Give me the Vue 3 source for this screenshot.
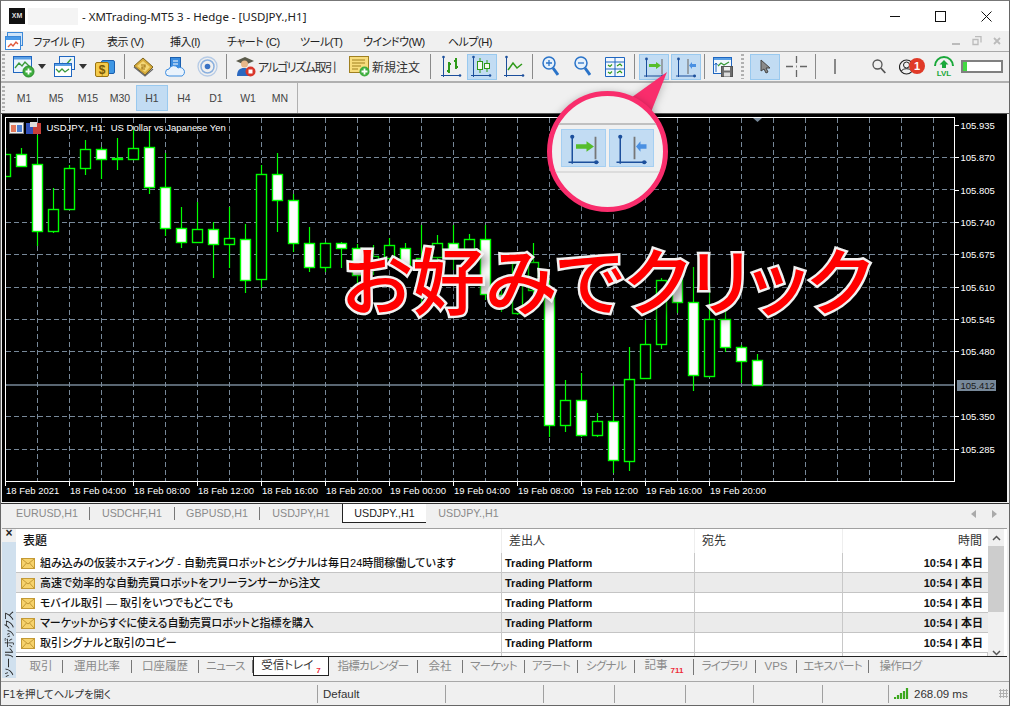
<script setup>
const priceLabels = [
  [125, '105.935'], [157.5, '105.870'], [190, '105.805'], [222, '105.740'], [254, '105.675'],
  [287, '105.610'], [319, '105.545'], [351, '105.480'], [416, '105.350'], [449, '105.285'],
]
const gridY = [157.5, 189.5, 222.5, 254.5, 287.5, 319.5, 351.5, 416.5, 449.5]
const gridX = Array.from({ length: 29 }, (_, i) => 37.5 + i * 32)

const timeLabels = [
  '18 Feb 2021', '18 Feb 04:00', '18 Feb 08:00', '18 Feb 12:00', '18 Feb 16:00',
  '18 Feb 20:00', '19 Feb 00:00', '19 Feb 04:00', '19 Feb 08:00', '19 Feb 12:00',
  '19 Feb 16:00', '19 Feb 20:00',
]

// x, wick top, wick bottom, body top, body bottom, white body?
const candles = [
  [5, 148, 180, 154, 176, 0], [21, 148, 167, 154, 166, 1], [37, 135, 246, 164, 231, 1],
  [53, 188, 233, 209, 231, 0], [69, 165, 209, 168, 209, 0], [85, 140, 175, 149, 168, 0],
  [101, 147, 179, 149, 159, 1], [117, 138, 170, 158, 159, 1], [133, 130, 160, 148, 159, 0],
  [149, 130, 194, 147, 187, 1], [165, 153, 236, 187, 228, 1], [181, 207, 248, 228, 242, 1],
  [197, 202, 242, 229, 242, 0], [213, 222, 278, 229, 244, 1], [229, 207, 268, 238, 244, 0],
  [245, 224, 293, 239, 280, 1], [261, 165, 288, 174, 279, 0], [277, 153, 232, 174, 200, 1],
  [293, 194, 252, 200, 243, 1], [309, 227, 272, 243, 267, 1], [325, 242, 272, 243, 267, 0],
  [341, 242, 268, 243, 248, 1], [357, 244, 286, 248, 275, 1], [373, 245, 275, 256, 268, 0],
  [389, 238, 265, 245, 258, 0], [405, 243, 268, 248, 265, 1], [421, 225, 315, 258, 266, 0],
  [437, 235, 270, 243, 257, 0], [453, 225, 270, 243, 257, 1], [469, 234, 268, 239, 257, 0],
  [485, 225, 300, 239, 294, 1], [501, 290, 312, 294, 300, 1], [517, 263, 315, 263, 313, 0],
  [533, 243, 303, 262, 290, 0], [549, 280, 437, 290, 425, 1], [565, 380, 432, 400, 425, 0],
  [581, 373, 437, 400, 435, 1], [597, 413, 437, 421, 435, 0], [613, 386, 473, 421, 460, 1],
  [629, 347, 471, 379, 461, 0], [645, 320, 378, 344, 378, 0], [661, 278, 349, 280, 344, 0],
  [677, 262, 313, 279, 302, 1], [693, 267, 391, 302, 375, 1], [709, 284, 377, 319, 376, 0],
  [725, 310, 352, 319, 347, 1], [741, 345, 383, 347, 361, 1], [757, 354, 385, 360, 385, 1],
].map(([x, wickTop, wickBottom, top, bottom, white]) => ({ x, wickTop, wickBottom, top, bottom, white }))

const menus = ['ファイル (F)', '表示 (V)', '挿入(I)', 'チャート (C)', 'ツール(T)', 'ウインドウ(W)', 'ヘルプ(H)']
const periods = ['M1', 'M5', 'M15', 'M30', 'H1', 'H4', 'D1', 'W1', 'MN']
const chartTabs = ['EURUSD,H1', 'USDCHF,H1', 'GBPUSD,H1', 'USDJPY,H1', 'USDJPY.,H1', 'USDJPY.,H1']

const mails = [
  '組み込みの仮装ホスティング - 自動売買ロボットとシグナルは毎日24時間稼働しています',
  '高速で効率的な自動売買ロボットをフリーランサーから注文',
  'モバイル取引 — 取引をいつでもどこでも',
  'マーケットからすぐに使える自動売買ロボットと指標を購入',
  '取引シグナルと取引のコピー',
]

const toolTabs = [
  { name: '取引' }, { name: '運用比率' }, { name: '口座履歴' }, { name: 'ニュース', kana: true },
  { name: '受信トレイ', count: '7', active: true }, { name: '指標カレンダー', kana: true }, { name: '会社' },
  { name: 'マーケット', kana: true }, { name: 'アラート', kana: true }, { name: 'シグナル', kana: true },
  { name: '記事', count: '711' }, { name: 'ライブラリ', kana: true }, { name: 'VPS' },
  { name: 'エキスパート', kana: true }, { name: '操作ログ', kana: true },
]
</script>

<template>
  <div class="window">
    <svg class="symbols" width="0" height="0">
      <symbol id="shift-on" viewBox="0 0 30 25">
        <path d="M7.500 5v18M5 22h20" stroke="#1c4f9c" fill="none" />
        <circle cx="7.500" cy="5" r="1.400" fill="#1c4f9c" />
        <circle cx="23.500" cy="22" r="1.400" fill="#1c4f9c" />
        <path d="M23 5v15" stroke="#777" stroke-width="1.200" />
        <path d="M10 10h7V8l5 3.500-5 3.500V13h-7z" fill="#56bd2c" />
      </symbol>
      <symbol id="shift-off" viewBox="0 0 30 25">
        <path d="M7.500 5v18M5 22h20" stroke="#1c4f9c" fill="none" />
        <circle cx="7.500" cy="5" r="1.400" fill="#1c4f9c" />
        <circle cx="23.500" cy="22" r="1.400" fill="#1c4f9c" />
        <path d="M17 5v15" stroke="#777" stroke-width="1.200" />
        <path d="M25 10h-4V8l-3 3.500 3 3.500v-2h4z" fill="#4a90e2" />
      </symbol>
    </svg>

    <header class="titlebar">
      <div class="logo">XM</div>
      <div class="blurred"></div>
      <div class="title">- XMTrading-MT5 3 - Hedge - [USDJPY.,H1]</div>
      <div class="win-buttons">
        <svg width="10" height="10"><path d="M0 5.500h10" stroke="#111" /></svg>
        <svg width="11" height="11"><rect x=".5" y=".5" width="10" height="10" fill="none" stroke="#111" /></svg>
        <svg width="11" height="11"><path d="M.5.500l10 10M10.500.500l-10 10" stroke="#111" /></svg>
      </div>
    </header>

    <nav class="menubar">
      <svg class="menu-icon" width="18" height="18" viewBox="0 0 18 18">
        <rect x="2.500" y=".5" width="15" height="13" fill="#cfe4f8" stroke="#3b88d8" />
        <rect x=".5" y="4.500" width="15" height="13" fill="#fff" stroke="#3b88d8" />
        <rect x="1" y="5" width="14" height="3" fill="#4a9ae8" />
        <path d="M3 15l3-3 2 2 3-4 2 2" fill="none" stroke="#e2593a" stroke-width="1.300" />
      </svg>
      <div class="menu-items">
        <span v-for="menu in menus" :key="menu">{{ menu }}</span>
      </div>
      <div class="mdi-buttons">
        <svg width="9" height="9"><path d="M0 7h8" stroke="#bbb" stroke-width="2" /></svg>
        <svg width="10" height="10"><path d="M3 .5h6v6M1 3.500h5v5H1z" fill="none" stroke="#bbb" stroke-width="1.300" /></svg>
        <svg width="9" height="9"><path d="M1 1l6 6M7 1L1 7" stroke="#bbb" stroke-width="1.800" /></svg>
      </div>
    </nav>

    <div class="toolbar">
      <i class="grip"></i>
      <svg width="22" height="22" viewBox="0 0 22 22">
        <rect x=".5" y=".5" width="18" height="16" fill="#eaf3fc" stroke="#1f66c0" />
        <rect x="1" y="1" width="17" height="2.500" fill="#5aa0e6" />
        <path d="M2 12l4-5 3 3 3-4 5 5" fill="none" stroke="#3a9a3a" stroke-width="1.300" />
        <circle cx="15.500" cy="15.500" r="5.500" fill="#3fae3f" stroke="#2a8a2a" />
        <path d="M15.500 12.500v6M12.500 15.500h6" stroke="#fff" stroke-width="1.800" />
      </svg>
      <svg width="8" height="5"><path d="M0 0h8L4 5z" fill="#333" /></svg>
      <svg width="22" height="22" viewBox="0 0 22 22">
        <rect x="5.500" y=".5" width="15" height="13" fill="#eaf3fc" stroke="#1f66c0" />
        <path d="M8 7l3 3 6-7" fill="none" stroke="#3a9a3a" stroke-width="1.300" />
        <rect x=".5" y="7.500" width="17" height="13" fill="#fff" stroke="#1f66c0" />
        <rect x="1" y="8" width="16" height="2" fill="#5aa0e6" />
        <path d="M2 13l3 3 3-3 3 3 4-3" fill="none" stroke="#3a9a3a" stroke-width="1.300" />
      </svg>
      <svg width="8" height="5"><path d="M0 0h8L4 5z" fill="#333" /></svg>
      <svg width="20" height="20" viewBox="0 0 20 20">
        <rect x="6.500" y="3.500" width="13" height="13" rx="1.500" fill="#3f97e4" stroke="#1b5fae" />
        <rect x=".5" y="5.500" width="13" height="14" rx="1.500" fill="#f5cb4c" stroke="#9a7412" />
        <text x="7" y="17" class="dollar">$</text>
      </svg>
      <i class="sep"></i>
      <svg width="21" height="20" viewBox="0 0 21 20">
        <path d="M1 9l9-8 10 9-8 8z" fill="#d8ac3c" stroke="#7d6520" />
        <path d="M4 9l6-5 7 6-5 5z" fill="#f3d777" />
        <path d="M8 8h4v2H9v2h3" fill="none" stroke="#a5781a" stroke-width="1.200" />
        <path d="M1 10l11 9 8-7" fill="none" stroke="#666" stroke-width="1.200" />
      </svg>
      <svg width="21" height="20" viewBox="0 0 21 20">
        <rect x="5.500" y=".5" width="10" height="13" fill="#3c8de0" stroke="#1b5fae" />
        <path d="M8 4h5M8 7h5" stroke="#fff" />
        <path d="M4 19a3.500 3.500 0 0 1 0-7 5 5 0 0 1 9-1 4 4 0 0 1 4 8z" fill="#eaf3fc" stroke="#3c8de0" />
      </svg>
      <svg width="21" height="21" viewBox="0 0 21 21" fill="none">
        <circle cx="10.500" cy="10.500" r="9.500" stroke="#b6cbe6" stroke-width="1.300" />
        <circle cx="10.500" cy="10.500" r="6.500" stroke="#8bb0de" stroke-width="1.500" />
        <circle cx="10.500" cy="10.500" r="2.800" fill="#3b73c4" />
      </svg>
      <i class="sep"></i>
      <div class="labeled">
        <svg width="21" height="21" viewBox="0 0 21 21">
          <path d="M1 5l9-4 9 4-9 4z" fill="#5a5a4a" />
          <circle cx="9.500" cy="8" r="3.500" fill="#e8b88a" />
          <path d="M2 20c0-6 3-8 7-8s7 2 7 8z" fill="#2a68c0" />
          <circle cx="15.500" cy="15.500" r="5" fill="#d9362a" />
          <rect x="13.500" y="13.500" width="4" height="4" fill="#fff" />
        </svg>
        <span class="algo">アルゴリズム取引</span>
      </div>
      <div class="labeled">
        <svg width="21" height="21" viewBox="0 0 21 21">
          <rect x=".5" y=".5" width="19" height="16" fill="#f8dd7d" stroke="#a08020" />
          <path d="M3 4h13M3 7h13M3 10h9M3 13h6" stroke="#a08020" />
          <circle cx="15.500" cy="15.500" r="5" fill="#3fae3f" />
          <path d="M15.500 12.500v6M12.500 15.500h6" stroke="#fff" stroke-width="1.800" />
        </svg>
        <span>新規注文</span>
      </div>
      <i class="sep"></i>
      <svg width="22" height="23" viewBox="0 0 22 23">
        <path d="M3.500 2v20M1 20.500h20" stroke="#1c4f9c" fill="none" />
        <circle cx="3.500" cy="2" r="1.300" fill="#1c4f9c" />
        <circle cx="20" cy="20.500" r="1.300" fill="#1c4f9c" />
        <path d="M9 7v11M7 16h2M9 9h2M16 3v11M14 6h2M16 12h2" stroke="#2f9a1a" stroke-width="2" fill="none" />
      </svg>
      <div class="on">
        <svg width="22" height="23" viewBox="0 0 22 23">
          <path d="M2.500 2v20M0 20.500h20" stroke="#1c4f9c" fill="none" />
          <circle cx="2.500" cy="2" r="1.300" fill="#1c4f9c" />
          <circle cx="19" cy="20.500" r="1.300" fill="#1c4f9c" />
          <path d="M9 3v15M16 5v12" stroke="#2f9a1a" />
          <rect x="6.500" y="6.500" width="5" height="8" fill="#f4f9ef" stroke="#2f9a1a" />
          <rect x="13.500" y="8.500" width="5" height="5" fill="#f4f9ef" stroke="#2f9a1a" />
        </svg>
      </div>
      <svg width="22" height="23" viewBox="0 0 22 23">
        <path d="M3.500 2v20M1 20.500h20" stroke="#1c4f9c" fill="none" />
        <circle cx="3.500" cy="2" r="1.300" fill="#1c4f9c" />
        <circle cx="20" cy="20.500" r="1.300" fill="#1c4f9c" />
        <path d="M5 15l5-7 4 5 5-4" stroke="#2f9a1a" stroke-width="1.500" fill="none" />
      </svg>
      <i class="sep"></i>
      <svg width="17" height="21" viewBox="0 0 17 21" fill="none">
        <circle cx="7" cy="7" r="6" fill="#e6f1fb" stroke="#2a73c8" stroke-width="1.500" />
        <path d="M4 7h6M7 4v6" stroke="#2a73c8" stroke-width="1.300" />
        <path d="M11 12l5 7" stroke="#2a73c8" stroke-width="3" />
      </svg>
      <svg width="17" height="21" viewBox="0 0 17 21" fill="none">
        <circle cx="7" cy="7" r="6" fill="#e6f1fb" stroke="#2a73c8" stroke-width="1.500" />
        <path d="M4 7h6" stroke="#2a73c8" stroke-width="1.300" />
        <path d="M11 12l5 7" stroke="#2a73c8" stroke-width="3" />
      </svg>
      <svg width="20" height="20" viewBox="0 0 20 20">
        <path d="M.5.500h19v19H.5zM.5 5h19M.5 12h19M10 .5v19" fill="#f3f8fd" stroke="#1f66c0" />
        <path d="M3 8l2 1.500 2-2M12 9l3-2 2 2M3 15l2 1.500 2-2M12 16l3-2 2 2" fill="none" stroke="#2f9a1a" stroke-width="1.200" />
      </svg>
      <i class="sep"></i>
      <div class="on"><svg width="30" height="25"><use href="#shift-on" /></svg></div>
      <div class="on"><svg width="30" height="25"><use href="#shift-off" /></svg></div>
      <i class="sep"></i>
      <svg width="20" height="20" viewBox="0 0 20 20">
        <rect x=".5" y=".5" width="18" height="16" fill="#f3f8fd" stroke="#1f66c0" />
        <rect x="1" y="1" width="17" height="2" fill="#5aa0e6" />
        <path d="M3 6v9M1.500 8L3 6l1.500 2" fill="none" stroke="#1f66c0" />
        <path d="M5 9l3-3 3 2 5-3" fill="none" stroke="#3a9a3a" stroke-width="1.300" />
        <rect x="8.500" y="9.500" width="11" height="10" fill="#6e6e6e" stroke="#555" />
        <rect x="11" y="10" width="6" height="3.500" fill="#eee" />
        <rect x="11" y="15.500" width="6" height="4" fill="#ddd" />
      </svg>
      <i class="grip"></i>
      <div class="on">
        <svg width="11" height="15" viewBox="0 0 11 15">
          <path d="M1 1v11l3-2 2 4 2-1-2-4h4z" fill="#8a8a8a" stroke="#444" />
        </svg>
      </div>
      <svg width="21" height="21" viewBox="0 0 21 21">
        <path d="M10.500 0v7M10.500 14v7M0 10.500h7M14 10.500h7" stroke="#666" stroke-width="1.300" />
        <path d="M10.500 9.500v2" stroke="#888" />
      </svg>
      <i class="sep"></i>
      <svg width="2" height="15"><path d="M1 0v15" stroke="#666" stroke-width="1.500" /></svg>
      <svg width="14" height="15" viewBox="0 0 14 15" fill="none">
        <circle cx="5.500" cy="5.500" r="4.500" stroke="#555" stroke-width="1.300" />
        <path d="M8.800 9l4.500 5" stroke="#555" stroke-width="1.800" />
      </svg>
      <svg class="account" width="26" height="17" viewBox="0 0 26 17" fill="none">
        <circle cx="7.500" cy="9" r="7" stroke="#222" stroke-width="1.200" />
        <circle cx="7.500" cy="7" r="3" stroke="#222" />
        <path d="M2.500 13c1-3 9-3 10 0" stroke="#222" />
        <circle cx="18" cy="8" r="8" fill="#e03a28" />
        <text x="18" y="12" class="badge">1</text>
      </svg>
      <svg width="20" height="21" viewBox="0 0 20 21" fill="none">
        <path d="M1 10a8.500 8.500 0 0 1 18 0" stroke="#19a83a" stroke-width="2" />
        <path d="M10 4l4.500 4.500H12V12H8V8.500H5.500z" fill="#19a83a" />
        <text x="10" y="20" class="lvl">LVL</text>
      </svg>
      <div class="progress"><i></i></div>
    </div>

    <div class="periods">
      <i class="grip"></i>
      <div class="period-list">
        <span v-for="period in periods" :key="period" :class="{ current: period === 'H1' }">{{ period }}</span>
      </div>
    </div>

    <main class="chart">
      <svg width="1005" height="388" viewBox="0 114 1005 388" class="plot">
        <clipPath id="plot-area"><rect x="6" y="118" width="948" height="363" /></clipPath>
        <g class="grid">
          <line v-for="y in gridY" :key="y" x1="6" :y1="y" x2="954" :y2="y" />
          <line v-for="x in gridX" :key="x" :x1="x" y1="118" :x2="x" y2="481" />
        </g>
        <line x1="6" y1="385" x2="955" y2="385" stroke="#778899" stroke-width="1.500" />
        <g clip-path="url(#plot-area)">
          <g v-for="c in candles" :key="c.x">
            <line class="wick" :x1="c.x + 0.5" :y1="c.wickTop" :x2="c.x + 0.5" :y2="c.wickBottom" />
            <rect class="body" :x="c.x - 4.5" :y="c.top + 0.5" width="10" :height="c.bottom - c.top"
                  :fill="c.white ? '#fff' : '#000'" />
          </g>
        </g>
        <rect x="5.500" y="117.500" width="949" height="364" fill="none" stroke="#fff" />
        <path d="M753 118h9l-4.500 4z" fill="#778899" />
        <g stroke="#fff">
          <line v-for="[y] in priceLabels" :key="y" x1="955" :y1="Math.floor(y) + 0.5" x2="959" :y2="Math.floor(y) + 0.5" />
          <line v-for="(label, i) in timeLabels" :key="i" :x1="5.500 + i * 64" y1="482" :x2="5.500 + i * 64" y2="486" />
        </g>
        <g class="axis-text">
          <text v-for="[y, label] in priceLabels" :key="label" x="960.500" :y="y + 3.500">{{ label }}</text>
          <text v-for="(label, i) in timeLabels" :key="label" :x="6 + i * 64" y="494">{{ label }}</text>
        </g>
        <rect x="957" y="380" width="39" height="11" fill="#778899" />
        <text x="960.500" y="389" class="axis-text last">105.412</text>

        <g>
          <rect x="9.500" y="122.500" width="14" height="11" fill="#f0f0f0" stroke="#888" />
          <path d="M11 125h5v7h-5z" fill="#e2775a" />
          <path d="M17 125h5v7h-5z" fill="#4d7fd0" />
          <rect x="26" y="123" width="7" height="11" fill="#2f4fb8" />
          <rect x="33" y="123" width="8" height="11" fill="#c8403a" />
          <rect x="30" y="122" width="7" height="5" fill="#ddd" />
        </g>
        <text x="46.500" y="131" class="chart-title">USDJPY., H1:&#160; US Dollar vs Japanese Yen</text>
      </svg>
      <div class="banner">お好みでクリック</div>
    </main>

    <div class="chart-tabs">
      <span v-for="(tab, i) in chartTabs" :key="i" :class="{ active: i === 4 }">{{ tab }}</span>
      <div class="tab-arrows">
        <svg width="5" height="8"><path d="M5 0v8L0 4z" fill="#aaa" /></svg>
        <svg width="5" height="8"><path d="M0 0v8l5-4z" fill="#aaa" /></svg>
      </div>
    </div>

    <section class="toolbox">
      <aside class="strip">
        <div class="close">×</div>
        <div class="strip-label"><span>ツールボックス</span></div>
      </aside>
      <div class="box-main">
        <div class="box-body">
          <div class="mail-table">
            <div class="mail-row head">
              <div class="subject">表題</div>
              <div>差出人</div>
              <div>宛先</div>
              <div class="when">時間</div>
            </div>
            <div v-for="(mail, i) in mails" :key="mail" class="mail-row" :class="{ alt: i % 2 === 1 }">
              <div class="subject">
                <svg width="14" height="11" viewBox="0 0 14 11">
                  <rect x=".5" y=".5" width="13" height="10" fill="#f6d26c" stroke="#c49a35" />
                  <path d="M1 1l6 5 6-5M1 10l4.500-5M13 10L8.500 5" fill="none" stroke="#c49a35" />
                </svg>
                <span>{{ mail }}</span>
              </div>
              <div class="sender">Trading Platform</div>
              <div></div>
              <div class="when stamp">10:54 | 本日</div>
            </div>
            <div class="mail-row stub"><div></div><div></div><div></div><div></div></div>
          </div>
          <div class="scrollbar">
            <svg width="9" height="6"><path d="M1 5l3.500-3.500L8 5" fill="none" stroke="#555" stroke-width="1.500" /></svg>
            <div class="track"><div class="thumb"></div></div>
            <svg width="9" height="6"><path d="M1 1l3.500 3.500L8 1" fill="none" stroke="#555" stroke-width="1.500" /></svg>
          </div>
        </div>
        <div class="tool-tabs">
          <div v-for="tab in toolTabs" :key="tab.name" class="tool-tab" :class="{ active: tab.active, kana: tab.kana }">
            {{ tab.name }}<sub v-if="tab.count">{{ tab.count }}</sub>
          </div>
        </div>
      </div>
    </section>

    <footer class="statusbar">
      <div class="help">F1を押してヘルプを開く</div>
      <div class="pad">Default</div>
      <div></div><div></div><div></div><div></div><div></div><div></div>
      <div class="ping">
        <svg width="15" height="11" viewBox="0 0 15 11">
          <path d="M1 11V9M4 11V7M7 11V5M10 11V3M13 11V0" stroke="#3ca81e" stroke-width="2.200" />
        </svg>
        <span>268.09 ms</span>
        <i class="resize"></i>
      </div>
    </footer>

    <div class="callout">
      <svg class="pointer" width="50" height="50" viewBox="0 0 50 50">
        <path d="M47 1L8 29l23 12z" fill="#f92d6c" />
      </svg>
      <div class="lens">
        <div class="lens-band">
          <i></i>
          <div class="lens-btn"><svg width="45" height="38"><use href="#shift-on" /></svg></div>
          <div class="lens-btn"><svg width="45" height="38"><use href="#shift-off" /></svg></div>
          <i></i>
        </div>
      </div>
    </div>
  </div>
</template>

<style>
html, body {
  margin: 0;
  overflow: hidden;
}
</style>

<style scoped>
.window {
  position: relative;
  display: flex;
  flex-direction: column;
  box-sizing: border-box;
  width: 1010px;
  height: 706px;
  overflow: hidden;
  background: #f0f0f0;
  border: 1px solid #666;
  border-top-color: #777;
  font-family: "Liberation Sans", "Noto Sans CJK JP", sans-serif;
  color: #222;
}
.symbols {
  position: absolute;
}

.titlebar {
  display: flex;
  align-items: center;
  flex: none;
  height: 30px;
  background: #fff;
  font-family: "Noto Sans", "Noto Sans CJK JP", sans-serif;
  font-size: 11.500px;
}
.logo {
  width: 16px;
  height: 16px;
  margin-left: 8px;
  background: #111;
  color: #ddd;
  font: bold 7px/16px "Liberation Sans", sans-serif;
  text-align: center;
}
.blurred {
  width: 50px;
  height: 17px;
  margin-left: 3px;
  background: #f4f4f4;
}
.title {
  margin-left: 4px;
}
.win-buttons {
  display: flex;
  align-items: center;
  gap: 35px;
  margin-left: auto;
  margin-right: 17px;
}

.menubar {
  display: flex;
  align-items: center;
  flex: none;
  height: 20px;
  font-size: 11px;
  letter-spacing: -0.500px;
  font-feature-settings: "palt";
}
.menu-icon {
  margin-left: 4px;
}
.menu-items {
  display: grid;
  grid-template-columns: 74px 63px 57px 73px 63px 85px auto;
  margin-left: 10px;
}
.mdi-buttons {
  display: flex;
  align-items: center;
  gap: 11px;
  margin-left: auto;
  margin-right: 7px;
}

.toolbar {
  display: grid;
  grid-template-columns: 11px 25px 16px 25px 16px 29px 9px 32px 32px 29px 9px 114px 81px 10px 27px 36px 29px 10px 32px 31px 29px 5px 32px 33px 9px 28px 9px 36px 29px 19px 38px 27px 35px 27px auto;
  align-items: center;
  flex: none;
  box-sizing: border-box;
  height: 32px;
  padding-left: 1px;
  border-top: 1px solid #a8a8a8;
  border-bottom: 2px solid #b0b0b0;
  font-size: 12px;
  font-feature-settings: "palt";
}
.grip {
  width: 3px;
  height: 25px;
  background: repeating-linear-gradient(#b0b0b0 0 2px, transparent 2px 4px);
}
.sep {
  width: 1px;
  height: 25px;
  background: #8a8a8a;
}
.labeled {
  display: flex;
  align-items: center;
  gap: 2px;
  color: #333;
}
.algo {
  letter-spacing: -1.500px;
  white-space: nowrap;
}
.on {
  display: flex;
  align-items: center;
  justify-content: center;
  box-sizing: border-box;
  width: 30px;
  height: 26px;
  background: #c2dcf3;
  border: 1px solid #99c9ef;
}
.on svg:only-child {
  flex: none;
}
.dollar {
  font: bold 12px "Liberation Sans", sans-serif;
  fill: #7a5a08;
  text-anchor: middle;
}
.badge {
  font: bold 11px "Liberation Sans", sans-serif;
  fill: #fff;
  text-anchor: middle;
}
.lvl {
  font: bold 8px "Liberation Sans", sans-serif;
  fill: #19a83a;
  text-anchor: middle;
}
.progress {
  width: 42px;
  height: 13px;
  box-sizing: border-box;
  background: #fff;
  border: 2px solid #808080;
}
.progress i {
  display: block;
  width: 4px;
  height: 100%;
  background: #43d943;
}

.periods {
  display: flex;
  align-items: center;
  flex: none;
  box-sizing: border-box;
  height: 31px;
  padding-left: 1px;
  border-bottom: 1px solid #555;
  font-size: 10.500px;
  color: #444;
}
.period-list {
  display: grid;
  grid-template-columns: repeat(9, 32px);
  align-items: center;
  margin-left: 3px;
  padding-right: 1px;
  height: 100%;
  border-right: 1px solid #b0b0b0;
}
.period-list span {
  text-align: center;
  line-height: 26px;
}
.period-list .current {
  background: #c2dcf3;
  border: 1px solid #99c9ef;
  line-height: 24px;
}

.chart {
  position: relative;
  flex: none;
  height: 388px;
  margin-left: 1px;
  margin-right: 2px;
  background: #000;
}
.plot {
  display: block;
  margin-left: -2px;
}
.grid line {
  stroke: #778899;
  stroke-dasharray: 5 3;
  shape-rendering: crispEdges;
}
.wick {
  stroke: #00ff00;
  stroke-width: 1.200;
}
.body {
  stroke: #00ff00;
  stroke-width: 1.400;
}
.axis-text {
  font: 9.500px "Liberation Sans", sans-serif;
  fill: #fff;
}
.axis-text.last {
  fill: #1a1a1a;
}
.chart-title {
  font: 9.500px "Liberation Sans", sans-serif;
  fill: #fff;
}
.banner {
  position: absolute;
  left: 340px;
  top: 113px;
  font-family: "Noto Sans CJK JP", sans-serif;
  font-size: 73px;
  font-weight: 500;
  line-height: 100px;
  white-space: nowrap;
  font-feature-settings: "palt";
  color: #ff0000;
  -webkit-text-stroke: 5px #f2f2f2;
  paint-order: stroke fill;
  filter: drop-shadow(4px 5px 5px rgba(0, 0, 0, 0.4));
}

.chart-tabs {
  display: grid;
  grid-template-columns: 85px 85px 85px 82px 84px 85px 1fr;
  align-items: center;
  flex: none;
  box-sizing: border-box;
  height: 20px;
  margin-top: 1px;
  padding-left: 4px;
  border-top: 1px solid #333;
  font-size: 10.700px;
  color: #8a8a8a;
}
.chart-tabs span {
  text-align: center;
  line-height: 13px;
  border-right: 1px solid #777;
}
.chart-tabs span:nth-child(4),
.chart-tabs span:nth-child(5),
.chart-tabs span:nth-child(6) {
  border-right: 0;
}
.chart-tabs .active {
  box-sizing: border-box;
  height: 19px;
  line-height: 18px;
  background: #fff;
  color: #222;
  border: 1px solid #222;
  border-top: 0;
}
.tab-arrows {
  display: flex;
  justify-content: flex-end;
  gap: 16px;
  margin-right: 12px;
}

.toolbox {
  display: flex;
  flex: none;
  height: 150px;
  margin-top: 5px;
  margin-left: 1px;
  margin-right: 2px;
  border-top: 1px solid #a0a0a0;
  box-sizing: border-box;
}
.strip {
  display: flex;
  flex-direction: column;
  flex: none;
  width: 14px;
}
.close {
  height: 13px;
  font: bold 12px/9px "Liberation Sans", sans-serif;
  text-align: center;
}
.strip-label {
  display: flex;
  align-items: flex-start;
  justify-content: center;
  flex: 1;
  background: #d0e0ee;
}
.strip-label span {
  margin-top: auto;
  writing-mode: vertical-rl;
  text-orientation: sideways;
  transform: rotate(180deg);
  font-size: 10.500px;
  font-feature-settings: "palt";
  line-height: 13px;
  color: #222;
}
.box-main {
  display: flex;
  flex-direction: column;
  flex: 1;
  min-width: 0;
}
.box-body {
  display: flex;
  height: 127px;
  background: #fff;
}
.mail-table {
  flex: none;
  width: 972px;
  overflow: hidden;
}
.mail-row {
  display: grid;
  grid-template-columns: 486px 193px 148px 145px;
  box-sizing: border-box;
  height: 20px;
  background: #fff;
  border-bottom: 1px solid #c4c4c4;
  font-size: 11px;
  line-height: 19px;
}
.mail-row > div {
  border-right: 1px solid #c8c8c8;
  box-sizing: border-box;
}
.mail-row.alt {
  background: #ebebeb;
}
.mail-row.head {
  height: 24px;
  border-bottom: 0;
  font-size: 12px;
  line-height: 24px;
  color: #333;
}
.mail-row.head > div {
  padding-left: 7px;
  border-right-color: #eee;
}
.mail-row.head .when {
  padding-right: 6px;
  text-align: right;
  border-right: 0;
}
.mail-row.stub {
  height: 3px;
  border-bottom: 0;
}
.subject {
  display: flex;
  align-items: center;
  gap: 5px;
  padding-left: 5px;
  font-weight: 500;
  color: #111;
  font-feature-settings: "palt";
  white-space: nowrap;
}
.sender {
  padding-left: 3px;
  font: bold 11px/21px "Liberation Sans", sans-serif;
  color: #111;
}
.stamp {
  padding-right: 5px;
  text-align: right;
  font: bold 11px/21px "Liberation Sans", "Noto Sans CJK JP", sans-serif;
  color: #111;
  border-right: 0 !important;
}
.scrollbar {
  display: flex;
  flex-direction: column;
  align-items: center;
  flex: none;
  width: 16px;
  padding-top: 6px;
  background: #f0f0f0;
  box-sizing: border-box;
}
.track {
  flex: 1;
  width: 100%;
  margin: 5px 0 4px;
}
.thumb {
  height: 66px;
  background: #cdcdcd;
}

.tool-tabs {
  display: grid;
  grid-template-columns: 47px 69px 67px 54px 76px 89px 45px 62px 53px 57px 59px 62px 41px 72px 63px;
  align-items: center;
  height: 20px;
  border-top: 1px solid #222;
  box-sizing: border-box;
  font-size: 11.500px;
  font-feature-settings: "palt";
  color: #8a8a8a;
}
.tool-tab {
  text-align: center;
  line-height: 13px;
  border-right: 1px solid #777;
  white-space: nowrap;
}
.tool-tab:first-child {
  padding-left: 4px;
}
.tool-tab.kana {
  letter-spacing: -0.700px;
}
.tool-tab sub {
  font: bold 8px "Liberation Sans", sans-serif;
  color: #ee2a3a;
  margin-left: 3px;
  vertical-align: -4px;
}
.tool-tab:last-child {
  border-right: 0;
}
.tool-tab.active {
  height: 19px;
  line-height: 17px;
  background: #fff;
  color: #333;
  border: 1px solid #222;
  border-top: 0;
  box-sizing: border-box;
}

.statusbar {
  display: grid;
  grid-template-columns: 317px 128px 98px 71px 71px 68px 69px 66px 1fr;
  align-items: center;
  flex: none;
  box-sizing: border-box;
  height: 24px;
  margin-top: 3px;
  border-top: 1px solid #a8a8a8;
  font-size: 11.500px;
  color: #333;
}
.statusbar > div {
  box-sizing: border-box;
  height: 18px;
  line-height: 18px;
  padding-left: 2px;
  border-right: 1px solid #a0a0a0;
}
.statusbar .help {
  font-size: 10.500px;
  font-feature-settings: "palt";
}
.statusbar .pad {
  padding-left: 5px;
}
.statusbar .ping {
  display: flex;
  align-items: center;
  gap: 5px;
  padding-left: 5px;
  border-right: 0;
  white-space: nowrap;
}
.resize {
  width: 9px;
  height: 9px;
  margin-left: auto;
  margin-right: 1px;
  background: radial-gradient(#b0b0b0 1px, transparent 1.200px) 0 0 / 3px 3px;
}

.callout {
  position: absolute;
  left: 546px;
  top: 90px;
  width: 121px;
  height: 121px;
}
.pointer {
  position: absolute;
  left: 73px;
  top: -20px;
  filter: drop-shadow(-2px 4px 5px rgba(0, 0, 0, 0.3));
}
.lens {
  position: absolute;
  inset: 0;
  box-sizing: border-box;
  border: 5px solid #f92d6c;
  border-radius: 50%;
  background: #f0f0f0;
  overflow: hidden;
  box-shadow: 0 3px 10px rgba(0, 0, 0, 0.4);
}
.lens-band {
  display: flex;
  align-items: center;
  justify-content: center;
  gap: 3px;
  margin-top: 27px;
  height: 46px;
  border-top: 2px solid #c0c0c0;
  border-bottom: 2px solid #dcdcdc;
}
.lens-band i {
  width: 3px;
  height: 100%;
  background: #a8a8a8;
  margin: 0 3px;
}
.lens-btn {
  box-sizing: border-box;
  width: 45px;
  height: 38px;
  background: #c2dcf3;
  border: 1px solid #a5cff2;
}
.lens-btn svg {
  display: block;
  margin: -1px;
}
</style>
